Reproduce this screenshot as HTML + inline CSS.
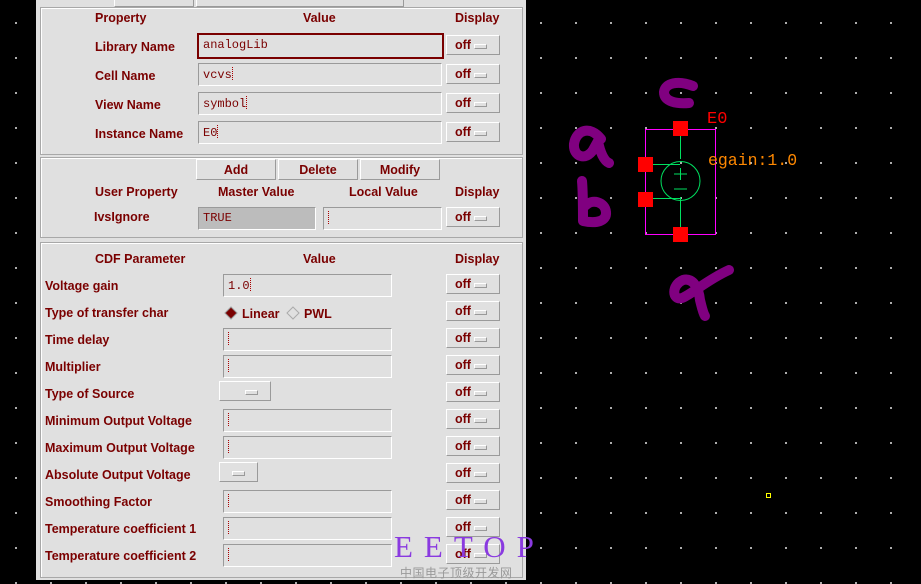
<!DOCTYPE html>
<html><head><meta charset="utf-8"><style>
*{margin:0;padding:0;box-sizing:border-box}
body{width:921px;height:584px;background:#000;position:relative;overflow:hidden;font-family:"Liberation Sans",sans-serif}
#grid{position:absolute;left:0;top:0;width:921px;height:584px;background-image:radial-gradient(circle at 1px 1px,#d8d8d8 0.9px,transparent 1.1px);background-size:35px 35px;background-position:15px 22px}
#panel{position:absolute;left:36px;top:0;width:490px;height:580px;background:#e0e0e0}
.sec{position:absolute;border:1px solid #a8a8a8;box-shadow:inset 1px 1px 0 #fff}
.l{position:absolute;color:#7a0000;font-weight:bold;font-size:12.5px;white-space:nowrap}
.f{position:absolute;height:23px;border:1px solid;border-color:#9a9a9a #fff #fff #9a9a9a;background:#e0e0e0;font-family:"Liberation Mono",monospace;font-size:12px;color:#7a0000;padding:3px 0 0 4px;white-space:nowrap}
.cur{display:inline-block;width:3px;height:13px;border-left:1px dotted #a00;vertical-align:-2px}
.b{position:absolute;left:446px;width:54px;height:20px;border:1px solid;border-color:#fff #9a9a9a #9a9a9a #fff;color:#7a0000;font-weight:bold;font-size:12.5px;padding:2px 0 0 8px}
.b:after,.m:after{content:"";position:absolute;right:12px;top:8px;width:11px;height:3px;border:1px solid;border-color:#fff #999 #999 #fff}
.m{position:absolute;width:52px;height:20px;border:1px solid;border-color:#fff #9a9a9a #9a9a9a #fff}
.btn{position:absolute;height:21px;border:1px solid;border-color:#fff #9a9a9a #9a9a9a #fff;color:#7a0000;font-weight:bold;font-size:12.5px;text-align:center;padding-top:3px}
</style></head><body>
<div id="grid"></div>
<div id="panel">
<div class="btn" style="left:78px;top:-14px;width:80px"></div>
<div class="btn" style="left:160px;top:-14px;width:208px"></div>
<div class="sec" style="left:4px;top:7px;width:483px;height:148px"></div>
<div class="sec" style="left:4px;top:157px;width:483px;height:81px"></div>
<div class="sec" style="left:4px;top:242px;width:483px;height:336px"></div>
</div>
<div class="l" style="left:95px;top:11px">Property</div>
<div class="l" style="left:303px;top:11px">Value</div>
<div class="l" style="left:455px;top:11px">Display</div>
<div class="l" style="left:95px;top:40px">Library Name</div>
<div class="f" style="left:197px;top:33px;width:247px;height:26px;border:2px solid #7a0000">analogLib</div>
<div class="b" style="top:35px">off</div>
<div class="l" style="left:95px;top:69px">Cell Name</div>
<div class="f" style="left:198px;top:63px;width:244px">vcvs<span class="cur"></span></div>
<div class="b" style="top:64px">off</div>
<div class="l" style="left:95px;top:98px">View Name</div>
<div class="f" style="left:198px;top:92px;width:244px">symbol<span class="cur"></span></div>
<div class="b" style="top:93px">off</div>
<div class="l" style="left:95px;top:127px">Instance Name</div>
<div class="f" style="left:198px;top:121px;width:244px">E0<span class="cur"></span></div>
<div class="b" style="top:122px">off</div>

<div class="btn" style="left:196px;top:159px;width:80px">Add</div>
<div class="btn" style="left:278px;top:159px;width:80px">Delete</div>
<div class="btn" style="left:360px;top:159px;width:80px">Modify</div>
<div class="l" style="left:95px;top:185px">User Property</div>
<div class="l" style="left:218px;top:185px">Master Value</div>
<div class="l" style="left:349px;top:185px">Local Value</div>
<div class="l" style="left:455px;top:185px">Display</div>
<div class="l" style="left:94px;top:210px">IvsIgnore</div>
<div class="f" style="left:198px;top:207px;width:118px;background:#bcbcbc">TRUE</div>
<div class="f" style="left:323px;top:207px;width:119px"><span class="cur"></span></div>
<div class="b" style="top:207px">off</div>

<div class="l" style="left:95px;top:252px">CDF Parameter</div>
<div class="l" style="left:303px;top:252px">Value</div>
<div class="l" style="left:455px;top:252px">Display</div>

<div class="l" style="left:45px;top:279px">Voltage gain</div>
<div class="f" style="left:223px;top:274px;width:169px">1.0<span class="cur"></span></div>
<div class="b" style="top:274px">off</div>
<div class="l" style="left:45px;top:306px">Type of transfer char</div>
<svg style="position:absolute;left:224px;top:305px" width="110" height="18"><path d="M7 2L13 8L7 14L1 8Z" fill="#7a0000" stroke="#999"/><path d="M69 2L75 8L69 14L63 8Z" fill="none" stroke="#aaa"/></svg>
<div class="l" style="left:242px;top:307px">Linear</div>
<div class="l" style="left:304px;top:307px">PWL</div>
<div class="b" style="top:301px">off</div>
<div class="l" style="left:45px;top:333px">Time delay</div>
<div class="f" style="left:223px;top:328px;width:169px"><span class="cur"></span></div>
<div class="b" style="top:328px">off</div>
<div class="l" style="left:45px;top:360px">Multiplier</div>
<div class="f" style="left:223px;top:355px;width:169px"><span class="cur"></span></div>
<div class="b" style="top:355px">off</div>
<div class="l" style="left:45px;top:387px">Type of Source</div>
<div class="m" style="left:219px;top:381px"></div>
<div class="b" style="top:382px">off</div>
<div class="l" style="left:45px;top:414px">Minimum Output Voltage</div>
<div class="f" style="left:223px;top:409px;width:169px"><span class="cur"></span></div>
<div class="b" style="top:409px">off</div>
<div class="l" style="left:45px;top:441px">Maximum Output Voltage</div>
<div class="f" style="left:223px;top:436px;width:169px"><span class="cur"></span></div>
<div class="b" style="top:436px">off</div>
<div class="l" style="left:45px;top:468px">Absolute Output Voltage</div>
<div class="m" style="left:219px;top:462px;width:39px"></div>
<div class="b" style="top:463px">off</div>
<div class="l" style="left:45px;top:495px">Smoothing Factor</div>
<div class="f" style="left:223px;top:490px;width:169px"><span class="cur"></span></div>
<div class="b" style="top:490px">off</div>
<div class="l" style="left:45px;top:522px">Temperature coefficient 1</div>
<div class="f" style="left:223px;top:517px;width:169px"><span class="cur"></span></div>
<div class="b" style="top:517px">off</div>
<div class="l" style="left:45px;top:549px">Temperature coefficient 2</div>
<div class="f" style="left:223px;top:544px;width:169px"><span class="cur"></span></div>
<div class="b" style="top:544px">off</div>
<div style="position:absolute;left:394px;top:529px;font-family:'Liberation Serif',serif;font-size:31px;color:#8a3ae0;letter-spacing:11px">EETOP</div>
<div style="position:absolute;left:400px;top:564px;font-family:'Noto Sans CJK SC',sans-serif;font-size:12px;color:#999;letter-spacing:0.5px">中国电子顶级开发网</div>

<svg style="position:absolute;left:0;top:0" width="921" height="584">
<rect x="645.5" y="129.5" width="70" height="105" fill="none" stroke="#ff00ff"/>
<path d="M680.5 129V159M680.5 197V234M646 164.5H680M646 198.5H680" stroke="#00e060" fill="none"/>
<circle cx="680.5" cy="181" r="19.5" fill="none" stroke="#00e060"/>
<path d="M674 174H687M680.5 168V180M674 189H687" stroke="#00e060"/>
<rect x="673" y="121" width="15" height="15" fill="#ff0000"/>
<rect x="638" y="157" width="15" height="15" fill="#ff0000"/>
<rect x="638" y="192" width="15" height="15" fill="#ff0000"/>
<rect x="673" y="227" width="15" height="15" fill="#ff0000"/>
<text x="707" y="123" fill="#ff0000" font-family="Liberation Mono,monospace" font-size="17">E0</text>
<text x="708" y="165" fill="#ff8800" font-family="Liberation Mono,monospace" font-size="16.5">egain:1.0</text>
<g stroke="#800080" stroke-width="10" fill="none" stroke-linecap="round" stroke-linejoin="round">
<path d="M693 86C678 80 665 83 664 92C664 102 677 104 689 103"/>
<path d="M601 139C590 125 576 130 574 144C573 157 586 161 593 150L598 141C600 152 604 161 609 163"/>
<path d="M582 181C583 192 583 210 583 221C597 224 607 221 606 212C605 202 592 198 585 206"/>
<path d="M729 270C707 280 692 294 682 298C672 301 671 285 683 280C694 277 699 290 700 300C702 308 703 313 705 316"/>
</g>
<rect x="766.5" y="493.5" width="4" height="4" fill="none" stroke="#ffff00"/>
</svg>
</body></html>
